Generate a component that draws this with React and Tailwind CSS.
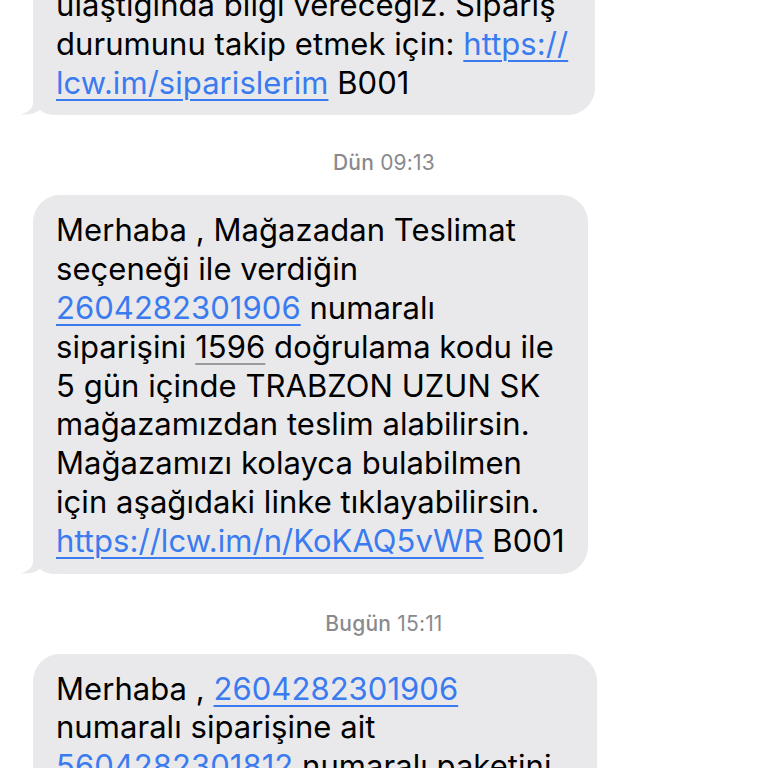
import React from "react";

const Link = ({ children }) => (
  <span className="text-[#3a7bf0] underline decoration-[1.5px] underline-offset-[5px]">
    {children}
  </span>
);

const Tail = () => (
  <svg
    className="absolute left-[-12px] bottom-0"
    width="34"
    height="28"
    viewBox="0 0 34 28"
  >
    <path
      d="M12 0 L12 15 C12 21 8 25 0 27.5 C8 28 14 26.5 19 23 C23 26.5 28 28 34 28 L34 0 Z"
      fill="#e9e9eb"
    />
  </svg>
);

const Bubble = ({ width, className = "", children }) => (
  <div className="pl-[33px]">
    <div
      className={`relative rounded-[27px] bg-[#e9e9eb] pl-[23px] pr-[20px] ${width} ${className}`}
    >
      <Tail />
      <div className="relative text-[31px] leading-[38.8px] text-black whitespace-nowrap tracking-[0.05px]">
        {children}
      </div>
    </div>
  </div>
);

const Stamp = ({ day, time, className = "" }) => (
  <div
    className={`text-center text-[21px] leading-[24px] tracking-[0.2px] text-[#8a8a8e] ${className}`}
  >
    <span className="font-medium">{day}</span> {time}
  </div>
);

export default function App() {
  return (
    <div
      className="w-[768px] h-[768px] overflow-hidden bg-white"
      style={{ fontFamily: "Inter, 'Noto Sans', sans-serif" }}
    >
      <div className="mt-[-30px]">
        <Bubble width="w-[562px]" className="pt-[16px] pb-[13px]">
          <div>ulaştığında bilgi vereceğiz. Sipariş</div>
          <div>
            durumunu takip etmek için: <Link>https://</Link>
          </div>
          <div>
            <Link>lcw.im/siparislerim</Link> B001
          </div>
        </Bubble>
      </div>

      <Stamp day="Dün" time="09:13" className="mt-[36px] mb-[20px]" />

      <Bubble width="w-[555px]" className="pt-[16px] pb-[13px]">
        <div>Merhaba , Mağazadan Teslimat</div>
        <div>seçeneği ile verdiğin</div>
        <div>
          <Link>2604282301906</Link> numaralı
        </div>
        <div>
          siparişini{" "}
          <span className="underline decoration-[#9a9a9a] decoration-[1.5px] underline-offset-[5px]">
            1596
          </span>{" "}
          doğrulama kodu ile
        </div>
        <div>5 gün içinde TRABZON UZUN SK</div>
        <div>mağazamızdan teslim alabilirsin.</div>
        <div>Mağazamızı kolayca bulabilmen</div>
        <div>için aşağıdaki linke tıklayabilirsin.</div>
        <div>
          <Link>https://lcw.im/n/KoKAQ5vWR</Link> B001
        </div>
      </Bubble>

      <Stamp day="Bugün" time="15:11" className="mt-[38px] mb-[18px]" />

      <Bubble width="w-[564px]" className="pt-[16px] pb-[13px]">
        <div>
          Merhaba , <Link>2604282301906</Link>
        </div>
        <div>numaralı siparişine ait</div>
        <div>
          <Link>5604282301812</Link> numaralı paketini
        </div>
        <div>kargoya teslim ettik.</div>
      </Bubble>
    </div>
  );
}
